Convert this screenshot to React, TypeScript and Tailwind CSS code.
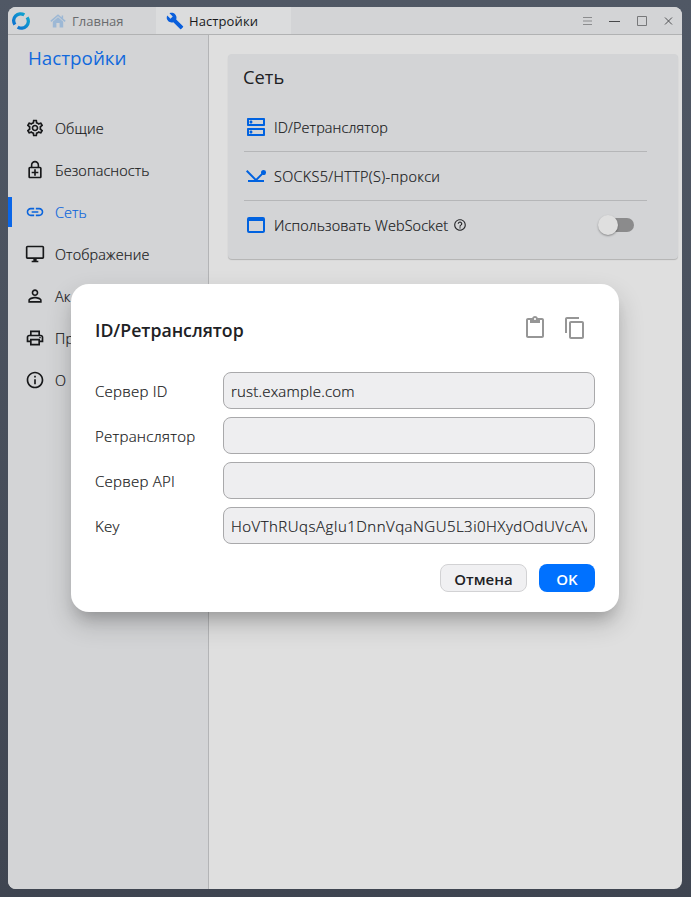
import type { ReactNode } from "react";
import {
  MdOutlineSettings,
  MdOutlineEnhancedEncryption,
  MdLink,
  MdOutlineDesktopWindows,
  MdPersonOutline,
  MdOutlinePrint,
  MdInfoOutline,
  MdOutlineDns,
  MdOutlineNetworkPing,
  MdOutlineWebAsset,
  MdHelpOutline,
  MdContentPaste,
  MdContentCopy,
  MdBuild,
} from "react-icons/md";

const navItems: { label: string; icon: ReactNode; active?: boolean }[] = [
  { label: "Общие", icon: <MdOutlineSettings size={20} /> },
  { label: "Безопасность", icon: <MdOutlineEnhancedEncryption size={20} /> },
  { label: "Сеть", icon: <MdLink size={20} />, active: true },
  { label: "Отображение", icon: <MdOutlineDesktopWindows size={20} /> },
  { label: "Ак", icon: <MdPersonOutline size={20} /> },
  { label: "Пр", icon: <MdOutlinePrint size={20} /> },
  { label: "О", icon: <MdInfoOutline size={20} /> },
];

const fields = [
  { label: "Сервер ID", value: "rust.example.com", valueClass: "tracking-[0.2px]" },
  { label: "Ретранслятор", value: "", valueClass: "" },
  { label: "Сервер API", value: "", valueClass: "" },
  {
    label: "Key",
    value: "HoVThRUqsAgIu1DnnVqaNGU5L3i0HXydOdUVcAV",
    valueClass: "tracking-[0.48px]",
  },
];

function Logo() {
  return (
    <svg width="18" height="18" viewBox="0 0 18 18" fill="none" strokeWidth="3.4">
      <defs>
        <linearGradient id="ring" x1="0" y1="18" x2="18" y2="0" gradientUnits="userSpaceOnUse">
          <stop offset="0" stopColor="#0a62d0" />
          <stop offset="1" stopColor="#12b4cf" />
        </linearGradient>
      </defs>
      <path d="M2.9 12.6A6.9 6.9 0 0 1 12.3 2.9" stroke="url(#ring)" />
      <path d="M15.1 5.4A6.9 6.9 0 0 1 5.7 15.1" stroke="url(#ring)" />
    </svg>
  );
}

function House() {
  return (
    <svg width="16" height="16" viewBox="0 0 16 16" fill="none">
      <path d="M2.8 7.8V14.4H6.4V10H9.6V14.4H13.2V7.8L8 3.6Z" fill="#9db8d5" />
      <path d="M.8 8.4 8 2.2 15.2 8.4M12.4 2.4V5.6" stroke="#9db8d5" strokeWidth="1.5" />
      <path d="M2.5 8.5 8 3.9 13.5 8.5" stroke="#d3d5d8" strokeWidth=".7" />
    </svg>
  );
}

function TitleBar() {
  return (
    <header className="flex h-7 shrink-0 items-stretch border-b border-[#b1b2b3] bg-[#d3d4d6] text-[13px]">
      <div className="flex w-[42px] items-center pl-1">
        <Logo />
      </div>
      <div className="flex w-[106px] items-center gap-[6px] text-[#696b6e]">
        <House />
        <span className="pt-[2px]">Главная</span>
      </div>
      <div className="flex w-[135px] items-center gap-[5px] bg-[#dbdcdd] pl-[10px] text-[#17181a]">
        <MdBuild size={18} color="#0a5fdc" />
        <span className="pt-[2px] tracking-[0.1px]">Настройки</span>
      </div>
      <div className="ml-auto flex items-center pr-[6px]">
        <svg width="94" height="12" viewBox="0 0 94 12" fill="none">
          <path d="M1 2.5H10M1 6H10M1 9.5H10" stroke="#8b8c8e" />
          <path d="M27 6.5H38" stroke="#47484a" />
          <path d="M55.5 1.5H64.5V10.5H55.5Z" stroke="#77787a" />
          <path d="M83 2.5 90 9.5M90 2.5 83 9.5" stroke="#4f5052" />
        </svg>
      </div>
    </header>
  );
}

function Sidebar() {
  return (
    <aside className="w-[201px] shrink-0 border-r border-[#b3b4b6] bg-[#d3d4d6]">
      <h1 className="flex h-[72px] items-start pl-5 pt-[9px] text-[18.8px] leading-7 text-[#1169dd]">
        Настройки
      </h1>
      <nav>
        {navItems.map((item) => (
          <div
            key={item.label}
            className={`flex h-[42px] items-center whitespace-nowrap text-[14.4px] font-light tracking-[0.12px] [-webkit-text-stroke:0.2px] ${item.active ? "text-[#0a64dc]" : "text-[#17181a]"}`}
          >
            <span className={`h-[30px] w-1 ${item.active ? "bg-[#0a66e8]" : ""}`} />
            <span className="ml-[13px] mr-[10px]">{item.icon}</span>
            <span className="pt-[2px]">{item.label}</span>
          </div>
        ))}
      </nav>
    </aside>
  );
}

function NetworkCard() {
  return (
    <section className="ml-[19px] mt-[19px] h-[205px] w-[450px] rounded-[4px] bg-[#d3d4d6] pl-4 text-[14.4px] text-[#17181a] shadow-[0_1px_1px_rgba(0,0,0,0.2)]">
      <h2 className="-ml-px flex h-[48px] items-center pb-[2px] text-[18.3px] text-[#202124]">Сеть</h2>
      <div className="w-[403px] font-light [-webkit-text-stroke:0.2px]">
        <div className="flex h-[50px] items-center border-b border-[#b5b6b8]">
          <MdOutlineDns size={24} color="#0062e0" />
          <span className="ml-[6px] pt-[2px] tracking-[0.12px]">ID/Ретранслятор</span>
        </div>
        <div className="flex h-[49px] items-center border-b border-[#b5b6b8]">
          <MdOutlineNetworkPing size={24} color="#0062e0" />
          <span className="ml-[6px] pt-[2px] tracking-[0.35px]">SOCKS5/HTTP(S)-прокси</span>
        </div>
        <div className="flex h-[48px] items-center">
          <MdOutlineWebAsset size={24} color="#0062e0" />
          <span className="ml-[6px] pt-[2px] tracking-[0.12px]">Использовать WebSocket</span>
          <MdHelpOutline size={14} className="ml-[5px]" color="#2b2c2f" />
          <div className="ml-auto mr-[13px] flex h-[14px] w-[34px] items-center rounded-full bg-[#8b8b8c]">
            <span className="-ml-[2px] h-5 w-5 shrink-0 rounded-full bg-[#dfdfdf] shadow-[0_1px_2px_rgba(0,0,0,0.35)]" />
          </div>
        </div>
      </div>
    </section>
  );
}

function ServerDialog() {
  return (
    <div
      role="dialog"
      className="absolute left-[71px] top-[284px] h-[328px] w-[548px] rounded-[18px] bg-white px-6 text-[15px] text-[#202124] shadow-[0_11px_15px_-7px_rgba(0,0,0,0.2),0_12px_24px_2px_rgba(0,0,0,0.16)]"
    >
      <div className="flex h-[88px] items-center">
        <h3 className="mt-[4px] text-[17.7px] font-semibold">ID/Ретранслятор</h3>
        <div className="ml-auto mr-2 flex gap-4 text-[#969696]">
          <MdContentPaste size={24} />
          <MdContentCopy size={24} />
        </div>
      </div>
      <div className="flex flex-col gap-2 font-light text-[#17181a] [-webkit-text-stroke:0.2px]">
        {fields.map((field) => (
          <div key={field.label} className="flex h-[37px] items-center">
            <span className="w-32 shrink-0 pt-px tracking-[0.25px]">{field.label}</span>
            <div className="flex h-full w-[372px] items-center rounded-[8px] border border-[#a9a9ab] bg-[#eeeef0] px-[7px]">
              <span className={`w-full overflow-hidden whitespace-nowrap pt-px ${field.valueClass}`}>{field.value}</span>
            </div>
          </div>
        ))}
      </div>
      <div className="mt-5 flex justify-end gap-3 font-semibold">
        <button className="h-7 w-[87px] rounded-[8px] border border-[#d2d2d4] bg-[#f0f0f2] pt-[2px]">Отмена</button>
        <button className="h-7 w-14 rounded-[8px] bg-[#0071ff] pt-[2px] text-white">OK</button>
      </div>
    </div>
  );
}

export default function App() {
  return (
    <div className="relative h-[897px] w-[691px] overflow-hidden bg-linear-to-b from-[#505865] to-[#3f4551] pl-2 pt-[7px] font-['Open_Sans','Noto_Sans',sans-serif]">
      <main className="flex h-[882px] w-[674px] flex-col overflow-hidden rounded-[8px] bg-[#dfdfdf]">
        <TitleBar />
        <div className="flex flex-1">
          <Sidebar />
          <NetworkCard />
        </div>
      </main>
      <ServerDialog />
    </div>
  );
}
